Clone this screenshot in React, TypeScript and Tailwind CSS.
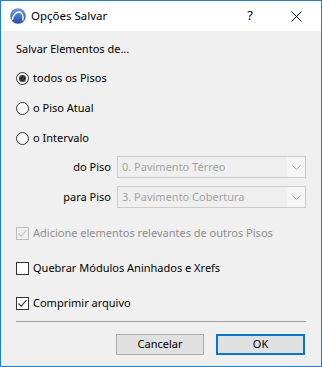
import React from 'react';

const font = { fontFamily: '"Noto Sans", "Open Sans", sans-serif' };

const Radio: React.FC<{ checked?: boolean; label: string }> = ({ checked, label }) => (
  <div className="flex items-center h-[20px]">
    <div className="w-[13px] h-[13px] rounded-full border border-[#333333] bg-white flex items-center justify-center">
      {checked && <div className="w-[7px] h-[7px] rounded-full bg-[#333333]" />}
    </div>
    <span className="ml-[4px] text-[11px] text-black">{label}</span>
  </div>
);

const Check: React.FC<{ checked?: boolean; disabled?: boolean; label: string }> = ({ checked, disabled, label }) => (
  <div className="flex items-center h-[20px]">
    <div
      className={`w-[13px] h-[13px] border flex items-center justify-center ${
        disabled ? 'border-[#bcbcbc] bg-[#f0f0f0]' : 'border-[#333333] bg-white'
      }`}
    >
      {checked && (
        <svg width="11" height="11" viewBox="0 0 11 11">
          <path d="M1.5 5.5 L4.2 8.2 L9.5 2.2" fill="none" stroke={disabled ? '#c4c4c4' : '#333333'} strokeWidth="1.1" />
        </svg>
      )}
    </div>
    <span className={`ml-[4px] text-[11px] ${disabled ? 'text-[#8d8d8d]' : 'text-black'}`}>{label}</span>
  </div>
);

const Select: React.FC<{ label: string; value: string }> = ({ label, value }) => (
  <div className="flex items-center h-[22px]">
    <span className="w-[95px] text-right text-[11px] text-black">{label}</span>
    <div className="ml-[6px] w-[189px] h-[22px] border border-[#cccccc] bg-[#f6f6f6] flex">
      <div className="flex-1 bg-[#efefef] flex items-center pl-[4px] text-[11px] text-[#a3a3a3]">{value}</div>
      <div className="w-[18px] flex items-center justify-center">
        <svg width="9" height="5" viewBox="0 0 9 5">
          <path d="M0.5 0.5 L4.5 4.5 L8.5 0.5" fill="none" stroke="#b0b0b0" strokeWidth="1" />
        </svg>
      </div>
    </div>
  </div>
);

export default function App() {
  return (
    <div className="w-[322px] h-[367px] border border-[#1a80d8] bg-[#f0f0f0] flex flex-col" style={font}>
      <div className="h-[30px] bg-white flex items-center shrink-0">
        <svg className="ml-[9px]" width="16" height="16" viewBox="0 0 16 16">
          <defs>
            <linearGradient id="lg" x1="0" y1="0" x2="0" y2="1">
              <stop offset="0" stopColor="#6a9ae6" />
              <stop offset="1" stopColor="#1f4fa8" />
            </linearGradient>
          </defs>
          <circle cx="8" cy="8" r="7.8" fill="url(#lg)" />
          <path d="M2.2 12 C3 7 6.5 3.2 10 4.2 C12.5 5 13.6 8.5 12.6 12.5" fill="none" stroke="#ffffff" strokeWidth="1.5" />
        </svg>
        <span className="ml-[5px] text-[11.5px] text-black">Opções Salvar</span>
        <span className="ml-auto mr-[38px] text-[13px] text-black">?</span>
        <svg className="mr-[19px]" width="11" height="11" viewBox="0 0 11 11">
          <path d="M0.5 0.5 L10.5 10.5 M10.5 0.5 L0.5 10.5" stroke="#000" strokeWidth="1" />
        </svg>
      </div>
      <div className="px-[15px] flex flex-col">
        <div className="mt-[8px] h-[20px] flex items-center text-[11px] text-black">Salvar Elementos de...</div>
        <div className="mt-[9px]"><Radio checked label="todos os Pisos" /></div>
        <div className="mt-[10px]"><Radio label="o Piso Atual" /></div>
        <div className="mt-[10px]"><Radio label="o Intervalo" /></div>
        <div className="mt-[8px]"><Select label="do Piso" value="0. Pavimento Térreo" /></div>
        <div className="mt-[8px]"><Select label="para Piso" value="3. Pavimento Cobertura" /></div>
        <div className="mt-[15px]"><Check checked disabled label="Adicione elementos relevantes de outros Pisos" /></div>
        <div className="mt-[15px]"><Check label="Quebrar Módulos Aninhados e Xrefs" /></div>
        <div className="mt-[15px]"><Check checked label="Comprimir arquivo" /></div>
        <div className="mt-[8px] h-px bg-[#a0a0a0]" />
        <div className="mt-[12px] flex justify-end gap-[12px] pr-[1px]">
          <button className="w-[88px] h-[21px] border border-[#adadad] bg-[#e1e1e1] text-[11px] text-black flex items-center justify-center">
            Cancelar
          </button>
          <button className="w-[89px] h-[21px] border-2 border-[#0078d7] bg-[#e1e1e1] text-[11px] text-black flex items-center justify-center">
            OK
          </button>
        </div>
      </div>
    </div>
  );
}
